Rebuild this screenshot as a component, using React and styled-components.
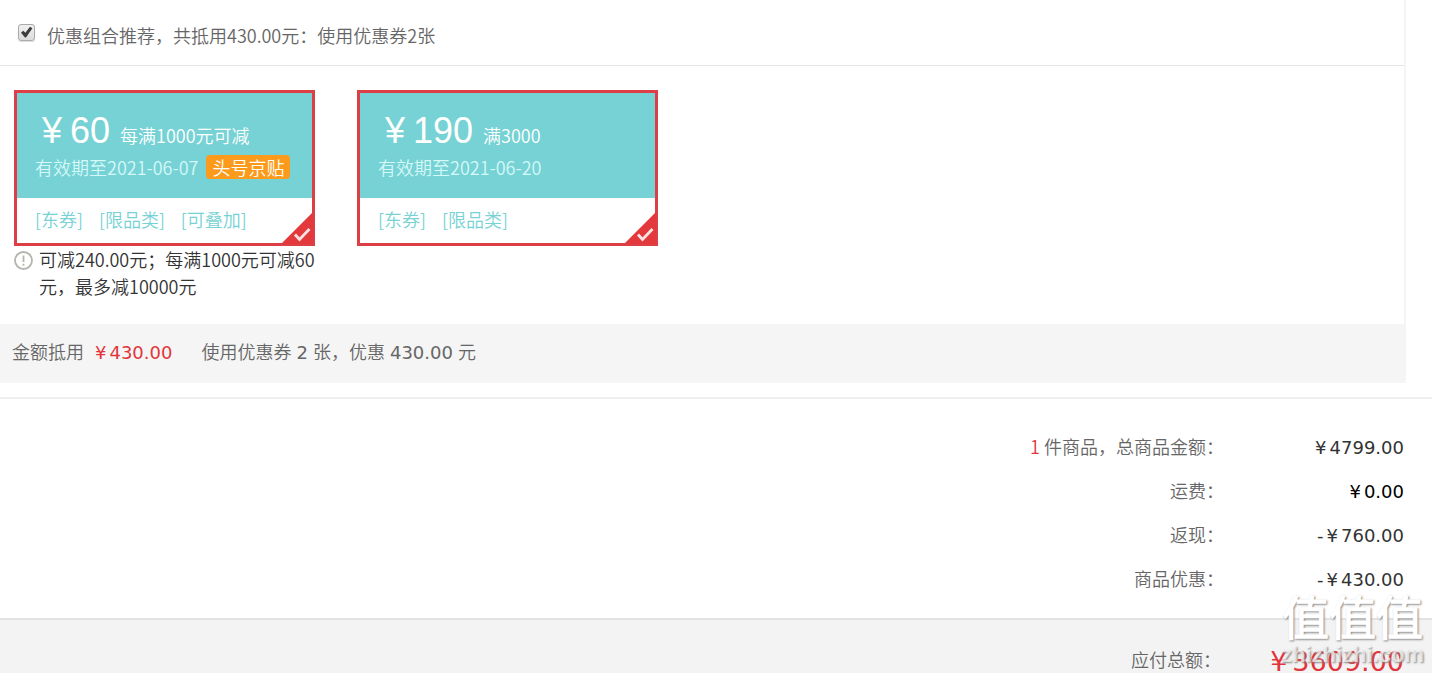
import React, { useState } from 'react';
import styled, { createGlobalStyle } from 'styled-components';

const GlobalStyle = createGlobalStyle`
  * {
    box-sizing: border-box;
  }
  body {
    margin: 0;
    background: #fff;
    color: #666;
    font: 350 18px/26px 'Noto Sans CJK SC DemiLight', 'Noto Sans CJK SC', 'Liberation Sans', sans-serif;
  }
`;

const Page = styled.div`
  position: relative;
  overflow: hidden;
`;

const Panel = styled.section`
  margin-right: 26px;
  border-right: 2px solid #f5f5f5;
`;

const PanelHeader = styled.label`
  display: flex;
  align-items: center;
  height: 66px;
  padding: 4px 18px 0;
  border-bottom: 1px solid #e6e6e6;
`;

const CheckBox = styled.span`
  display: grid;
  width: 17px;
  height: 17px;
  margin: 0 12px 4px 0;

  input,
  svg {
    grid-area: 1 / 1;
    width: 17px;
    height: 17px;
    margin: 0;
  }
  input {
    appearance: none;
    border: 1px solid #aaa;
    border-radius: 3px;
    background: linear-gradient(#f0f0f0, #dcdcdc);
    box-shadow: 0 1px 1px #ddd;
  }
  svg {
    pointer-events: none;
  }
`;

const CouponList = styled.div`
  display: flex;
  gap: 37px;
  padding: 24px 14px;
`;

const CouponItem = styled.div`
  width: 306px;
`;

const CouponCard = styled.button`
  position: relative;
  display: block;
  width: 301px;
  padding: 0;
  border: 3px solid ${props => (props.$selected ? '#dc4046' : '#fff')};
  background: #fff;
  color: #76d2d4;
  font: inherit;
  text-align: left;
  cursor: pointer;
`;

const CouponTop = styled.span`
  display: block;
  height: 105px;
  padding: 16px 18px 0;
  background: #76d2d4;
  color: #fff;
`;

const CouponPrice = styled.span`
  display: flex;
  align-items: baseline;
  height: 45px;
  padding-left: 7px;
  line-height: 44px;
`;

const Amount = styled.span`
  margin-right: 10px;
  font-family: 'Liberation Sans', sans-serif;
  font-size: 36px;
`;

const Yen = styled.span`
  margin-right: ${props => props.$gap || 3}px;
`;

const CouponDate = styled.span`
  display: flex;
  align-items: center;
  color: #d5f8f8;
`;

const Badge = styled.span`
  margin-left: 8px;
  padding: 0 6px;
  border-radius: 4px;
  background: #fc9a1b;
  color: #fff;
  line-height: 24px;
`;

const CouponTags = styled.span`
  display: flex;
  gap: 16px;
  height: 45px;
  padding: 0 18px;
  line-height: 42px;
`;

const Corner = styled.svg`
  position: absolute;
  right: -1px;
  bottom: -1px;
  width: 32px;
  height: 32px;
`;

const Note = styled.p`
  display: flex;
  gap: 6px;
  margin: 0;
  color: #333;
  line-height: 27px;

  svg {
    flex: none;
    width: 19px;
    height: 19px;
    margin-top: 5px;
  }
`;

const Summary = styled.div`
  display: flex;
  align-items: baseline;
  height: 59px;
  padding: 14px 12px 0;
  background: #f5f5f5;
`;

const Money = styled.span`
  margin: 0 1px;
  font-family: 'DejaVu Sans', sans-serif;
  font-weight: 400;
`;

const RedMoney = styled(Money)`
  margin: 0 29px 0 11px;
  color: #e2353c;
`;

const Totals = styled.dl`
  margin: 14px 0 0;
  padding: 25px 28px 18px;
  border-top: 2px solid #efefef;
`;

const TotalRow = styled.div`
  display: flex;
  align-items: baseline;
  justify-content: flex-end;
  height: 44px;
  line-height: 44px;

  dd {
    width: 180px;
    margin: 0;
    color: ${props => props.$color || '#333'};
    font-family: 'DejaVu Sans', sans-serif;
    font-weight: 400;
    text-align: right;
  }
`;

const Count = styled.span`
  color: #e2353c;
`;

const Footer = styled.dl`
  margin: 0;
  padding: 25px 28px 0;
  border-top: 2px solid #e3e3e3;
  background: #f3f3f3;
`;

const PayRow = styled(TotalRow)`
  align-items: flex-start;
  height: 28px;
  line-height: 28px;

  dd {
    width: 183px;
    font-size: 27px;
    line-height: 34px;
  }
`;

const Watermark = styled.div`
  position: absolute;
  right: 8px;
  bottom: 2px;
  color: #fff;
  font-weight: 700;
  text-align: center;
  text-shadow: 1px 1px 2px #888;
  pointer-events: none;

  strong {
    display: block;
    font-size: 47px;
    line-height: 48px;
  }
  span {
    display: block;
    color: rgba(255, 255, 255, 0.7);
    font-family: 'Liberation Sans', sans-serif;
    font-size: 22px;
    line-height: 32px;
  }
`;

const coupons = [
  {
    id: 1,
    amount: '60',
    rule: '每满1000元可减',
    date: '有效期至2021-06-07',
    badge: '头号京贴',
    tags: ['[东券]', '[限品类]', '[可叠加]'],
    note: '可减240.00元；每满1000元可减60元，最多减10000元',
  },
  {
    id: 2,
    amount: '190',
    rule: '满3000',
    date: '有效期至2021-06-20',
    tags: ['[东券]', '[限品类]'],
  },
];

const totals = [
  { label: '总商品金额：', count: 1, value: '4799.00' },
  { label: '运费：', value: '0.00', color: '#000' },
  { label: '返现：', value: '760.00', minus: true },
  { label: '商品优惠：', value: '430.00', minus: true },
];

const Coupon = ({ coupon }) => {
  const [selected, setSelected] = useState(true);

  return (
    <CouponItem>
      <CouponCard type="button" aria-pressed={selected} $selected={selected} onClick={() => setSelected(!selected)}>
        <CouponTop>
          <CouponPrice>
            <Amount><Yen $gap={8}>¥</Yen>{coupon.amount}</Amount>
            {coupon.rule}
          </CouponPrice>
          <CouponDate>
            {coupon.date}
            {coupon.badge && <Badge>{coupon.badge}</Badge>}
          </CouponDate>
        </CouponTop>
        <CouponTags>
          {coupon.tags.map(tag => <span key={tag}>{tag}</span>)}
        </CouponTags>
        {selected && (
          <Corner viewBox="0 0 32 32" aria-hidden="true">
            <path d="M32 0v32H0z" fill="#e4393c" />
            <path d="M14 22.5l4.5 5L28.5 17" fill="none" stroke="#fbe3e3" strokeWidth="2.8" />
          </Corner>
        )}
      </CouponCard>
      {coupon.note && (
        <Note>
          <svg viewBox="0 0 19 19" aria-hidden="true">
            <circle cx="9.5" cy="9.5" r="8.5" fill="none" stroke="#b5b5ad" strokeWidth="1.8" />
            <path d="M9.5 4.5v6.5M9.5 12.7v2" stroke="#b5b5ad" strokeWidth="1.8" />
          </svg>
          <span>{coupon.note}</span>
        </Note>
      )}
    </CouponItem>
  );
};

const App = () => {
  const [checked, setChecked] = useState(true);

  return (
    <Page>
      <GlobalStyle />
      <Panel>
        <PanelHeader>
          <CheckBox>
            <input type="checkbox" checked={checked} onChange={e => setChecked(e.target.checked)} />
            {checked && (
              <svg viewBox="0 0 17 17" aria-hidden="true">
                <path d="M3 8.7l2.2-2 2.2 2.1 4.6-6 2.4 1.4-6.4 9.4H7z" fill="#3c3c3c" />
              </svg>
            )}
          </CheckBox>
          优惠组合推荐，共抵用430.00元：使用优惠券2张
        </PanelHeader>
        <CouponList>
          {coupons.map(coupon => <Coupon key={coupon.id} coupon={coupon} />)}
        </CouponList>
        <Summary>
          金额抵用
          <RedMoney><Yen>¥</Yen>430.00</RedMoney>
          <span>使用优惠券 <Money>2</Money> 张，优惠 <Money>430.00</Money> 元</span>
        </Summary>
      </Panel>
      <Totals>
        {totals.map(row => (
          <TotalRow key={row.label} $color={row.color}>
            <dt>
              {row.count && <><Count>{row.count}</Count> 件商品，</>}
              {row.label}
            </dt>
            <dd>
              {row.minus && <Yen>-</Yen>}
              <Yen>¥</Yen>
              {row.value}
            </dd>
          </TotalRow>
        ))}
      </Totals>
      <Footer>
        <PayRow $color="#e2353c">
          <dt>应付总额：</dt>
          <dd><Yen $gap={5}>¥</Yen>3609.00</dd>
        </PayRow>
      </Footer>
      <Watermark aria-hidden="true">
        <strong>值值值</strong>
        <span>zhizhizhi.com</span>
      </Watermark>
    </Page>
  );
};

export default App;
